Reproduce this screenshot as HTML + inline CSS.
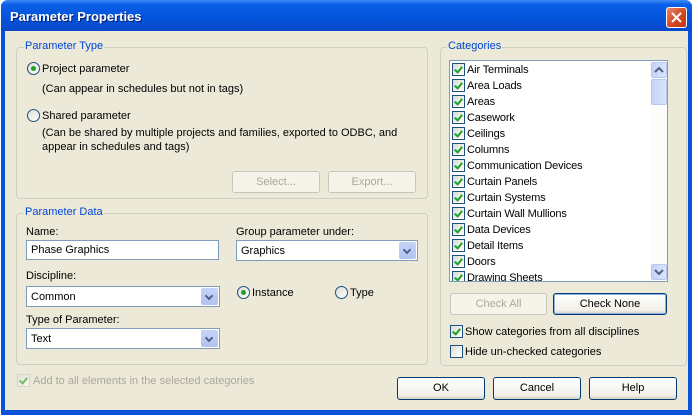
<!DOCTYPE html>
<html><head><style>
*{box-sizing:border-box;margin:0;padding:0}
body{width:698px;height:420px;background:#fff;font-family:"Liberation Sans",Arial,sans-serif;font-size:11px;color:#000;position:relative;overflow:hidden}
.win{position:absolute;left:1px;top:0;width:691px;height:415px;background:#0a52d8;border-radius:7px 7px 0 0}
.title{position:absolute;left:0;top:0;width:691px;height:31px;border-radius:7px 7px 0 0;background:linear-gradient(#3d8cf5 0%,#0a5ee6 15%,#0453dc 60%,#0849c8 100%)}
.title span{position:absolute;left:9px;top:9px;color:#fff;font-weight:bold;font-size:13px;text-shadow:1px 1px #0a1f6e}
.close{position:absolute;left:665px;top:7px;width:21px;height:21px;border:1px solid #fff;border-radius:3px;background:linear-gradient(135deg,#e98a6a,#d2431c 60%,#c0391a)}
.client{position:absolute;left:4px;top:31px;width:683px;height:379px;background:#ece9d8}
.a{position:absolute;white-space:nowrap;margin-top:1px}
.grp{position:absolute;border:1px solid #d0d0bf;border-radius:4px}
.lg{position:absolute;color:#0046d5;background:#ece9d8;padding:0 1px;white-space:nowrap}
.radio{position:absolute;width:13px;height:13px;border:1px solid #1c5180;border-radius:50%;background:linear-gradient(135deg,#dcdcd6,#fff)}
.radio.on::after{content:"";position:absolute;left:3px;top:3px;width:5px;height:5px;border-radius:50%;background:#21a121}
.chk{position:absolute;width:13px;height:13px;border:1px solid #1c5180;background:linear-gradient(135deg,#dcdcd6,#fff)}
.chk.on::after{content:"";position:absolute;left:3px;top:1px;width:3px;height:6px;border:solid #21a121;border-width:0 2px 2px 0;transform:rotate(40deg)}
.btn{position:absolute;border:1px solid #003c74;border-radius:3px;background:linear-gradient(#fff,#f2f1ea 80%,#d6d0c5);text-align:center;line-height:21px}
.btn.dis{border-color:#c9c7ba;color:#aca899;background:#f5f4ea}
.inp{position:absolute;border:1px solid #7f9db9;background:#fff;padding-left:4px;line-height:19px;white-space:nowrap}
.dd{position:absolute;width:17px;height:17px;right:1px;top:1px;border-radius:2px;background:linear-gradient(#c6d3f7,#b2c3f1);}
.dd::after{content:"";position:absolute;left:5px;top:5px;width:4px;height:4px;border:solid #4d6185;border-width:0 2px 2px 0;transform:rotate(45deg)}
.list{position:absolute;left:444px;top:29px;width:219px;height:222px;border:1px solid #7f9db9;background:#fff;overflow:hidden}
.it{position:absolute;left:2px;width:190px;height:16px;line-height:17px;white-space:nowrap}
.it .chk{left:0;top:1px}
.it span{position:absolute;left:15px;top:0;white-space:nowrap;letter-spacing:-0.15px}
.sb{position:absolute;right:0;top:0;width:17px;height:220px;background:#fcfcfa}
.sbb{position:absolute;left:1px;width:16px;border:1px solid #b8c8f2;border-radius:2px;background:linear-gradient(90deg,#c6d3f7,#dbe4fb)}
</style></head><body>
<div class="win">
<div class="title"><span>Parameter Properties</span>
<div class="close"><svg width="19" height="19" style="position:absolute;left:0;top:0"><path d="M5 5L14 14M14 5L5 14" stroke="#fff" stroke-width="2"/></svg></div></div>
<div class="client">
<div class="grp" style="left:11px;top:16px;width:412px;height:152px"></div>
<div class="lg" style="left:19px;top:9px">Parameter Type</div>
<div class="radio on" style="left:22px;top:31px"></div><div class="a" style="left:37px;top:31px">Project parameter</div>
<div class="a" style="left:37px;top:51px">(Can appear in schedules but not in tags)</div>
<div class="radio" style="left:22px;top:78px"></div><div class="a" style="left:37px;top:78px">Shared parameter</div>
<div class="a" style="left:37px;top:95px">(Can be shared by multiple projects and families, exported to ODBC, and</div>
<div class="a" style="left:37px;top:109px">appear in schedules and tags)</div>
<div class="btn dis" style="left:227px;top:140px;width:88px;height:22px">Select...</div>
<div class="btn dis" style="left:323px;top:140px;width:88px;height:22px">Export...</div>

<div class="grp" style="left:11px;top:182px;width:412px;height:152px"></div>
<div class="lg" style="left:19px;top:175px">Parameter Data</div>
<div class="a" style="left:21px;top:194px">Name:</div>
<div class="inp" style="left:21px;top:209px;width:193px;height:20px">Phase Graphics</div>
<div class="a" style="left:231px;top:194px">Group parameter under:</div>
<div class="inp" style="left:231px;top:209px;width:182px;height:21px;line-height:20px">Graphics<div class="dd"></div></div>
<div class="a" style="left:21px;top:238px">Discipline:</div>
<div class="inp" style="left:21px;top:255px;width:194px;height:21px;line-height:20px">Common<div class="dd"></div></div>
<div class="radio on" style="left:232px;top:255px"></div><div class="a" style="left:247px;top:255px">Instance</div>
<div class="radio" style="left:330px;top:255px"></div><div class="a" style="left:345px;top:255px">Type</div>
<div class="a" style="left:21px;top:282px">Type of Parameter:</div>
<div class="inp" style="left:21px;top:297px;width:194px;height:21px;line-height:20px">Text<div class="dd"></div></div>
<div class="chk on" style="left:12px;top:343px;border-color:#c9c7ba;opacity:.6"></div><div class="a" style="left:28px;top:343px;color:#aca899">Add to all elements in the selected categories</div>

<div class="grp" style="left:435px;top:16px;width:247px;height:319px"></div>
<div class="lg" style="left:442px;top:9px">Categories</div>
<div class="list">
<div class="it" style="top:1px"><div class="chk on"></div><span>Air Terminals</span></div>
<div class="it" style="top:17px"><div class="chk on"></div><span>Area Loads</span></div>
<div class="it" style="top:33px"><div class="chk on"></div><span>Areas</span></div>
<div class="it" style="top:49px"><div class="chk on"></div><span>Casework</span></div>
<div class="it" style="top:65px"><div class="chk on"></div><span>Ceilings</span></div>
<div class="it" style="top:81px"><div class="chk on"></div><span>Columns</span></div>
<div class="it" style="top:97px"><div class="chk on"></div><span>Communication Devices</span></div>
<div class="it" style="top:113px"><div class="chk on"></div><span>Curtain Panels</span></div>
<div class="it" style="top:129px"><div class="chk on"></div><span>Curtain Systems</span></div>
<div class="it" style="top:145px"><div class="chk on"></div><span>Curtain Wall Mullions</span></div>
<div class="it" style="top:161px"><div class="chk on"></div><span>Data Devices</span></div>
<div class="it" style="top:177px"><div class="chk on"></div><span>Detail Items</span></div>
<div class="it" style="top:193px"><div class="chk on"></div><span>Doors</span></div>
<div class="it" style="top:209px"><div class="chk on"></div><span>Drawing Sheets</span></div>
<div class="sb">
<div class="sbb" style="top:1px;height:16px"><svg width="14" height="14"><path d="M3 9L7 5L11 9" stroke="#4d6185" stroke-width="2" fill="none"/></svg></div>
<div class="sbb" style="top:18px;height:26px"></div>
<div class="sbb" style="top:203px;height:16px"><svg width="14" height="14"><path d="M3 5L7 9L11 5" stroke="#4d6185" stroke-width="2" fill="none"/></svg></div>
</div></div>
<div class="btn dis" style="left:445px;top:262px;width:97px;height:22px">Check All</div>
<div class="btn" style="left:548px;top:262px;width:114px;height:22px;border-color:#003c74;box-shadow:inset 0 0 0 1px #8db2e3">Check None</div>
<div class="chk on" style="left:445px;top:294px"></div><div class="a" style="left:460px;top:294px">Show categories from all disciplines</div>
<div class="chk" style="left:445px;top:314px"></div><div class="a" style="left:460px;top:314px">Hide un-checked categories</div>

<div class="btn" style="left:392px;top:346px;width:88px;height:23px">OK</div>
<div class="btn" style="left:488px;top:346px;width:88px;height:23px">Cancel</div>
<div class="btn" style="left:584px;top:346px;width:88px;height:23px">Help</div>
</div></div>
</body></html>
